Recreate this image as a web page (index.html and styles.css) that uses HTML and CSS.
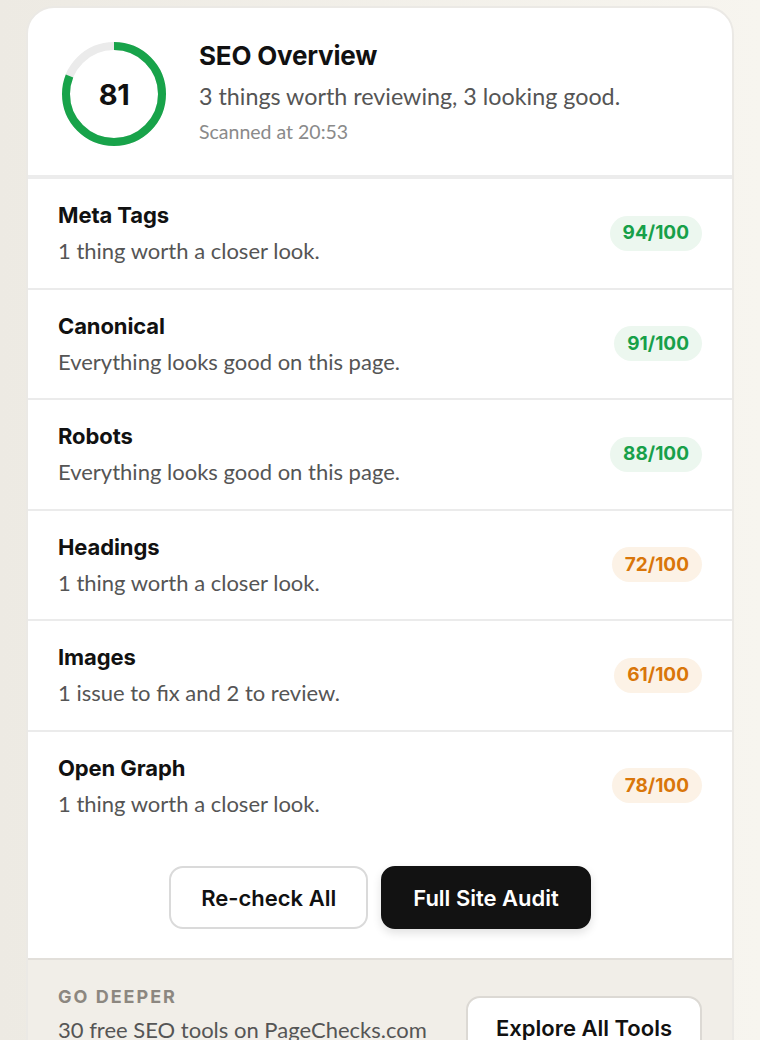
FILE: index.html
```html
<!DOCTYPE html>
<html lang="en">
<head>
    <meta charset="UTF-8">
    <meta name="viewport" content="width=device-width, initial-scale=1.0">
    <title>SEO Overview</title>
    <link rel="stylesheet" href="styles.css">
</head>
<body>
    <div class="card">
        <div class="overview">
            <div class="ring">
                <svg width="104" height="104" viewBox="0 0 104 104">
                    <circle class="ring-track" cx="52" cy="52" r="48"></circle>
                    <circle class="ring-value" cx="52" cy="52" r="48" stroke-dasharray="244.3 301.6" transform="rotate(-90 52 52)"></circle>
                </svg>
                <span class="ring-score">81</span>
            </div>
            <div class="overview-text">
                <h1 class="overview-title">SEO Overview</h1>
                <p class="overview-summary">3 things worth reviewing, 3 looking good.</p>
                <p class="overview-time">Scanned at 20:53</p>
            </div>
        </div>

        <div class="checks">
            <div class="check">
                <div class="check-info">
                    <div class="check-name">Meta Tags</div>
                    <div class="check-note">1 thing worth a closer look.</div>
                </div>
                <span class="badge good">94/100</span>
            </div>
            <div class="check">
                <div class="check-info">
                    <div class="check-name">Canonical</div>
                    <div class="check-note">Everything looks good on this page.</div>
                </div>
                <span class="badge good">91/100</span>
            </div>
            <div class="check">
                <div class="check-info">
                    <div class="check-name">Robots</div>
                    <div class="check-note">Everything looks good on this page.</div>
                </div>
                <span class="badge good">88/100</span>
            </div>
            <div class="check">
                <div class="check-info">
                    <div class="check-name">Headings</div>
                    <div class="check-note">1 thing worth a closer look.</div>
                </div>
                <span class="badge warn">72/100</span>
            </div>
            <div class="check">
                <div class="check-info">
                    <div class="check-name">Images</div>
                    <div class="check-note">1 issue to fix and 2 to review.</div>
                </div>
                <span class="badge warn">61/100</span>
            </div>
            <div class="check">
                <div class="check-info">
                    <div class="check-name">Open Graph</div>
                    <div class="check-note">1 thing worth a closer look.</div>
                </div>
                <span class="badge warn">78/100</span>
            </div>
        </div>

        <div class="actions">
            <button class="btn">Re-check All</button>
            <button class="btn btn-dark">Full Site Audit</button>
        </div>

        <div class="promo">
            <div class="promo-text">
                <div class="promo-label">GO DEEPER</div>
                <div class="promo-desc">30 free SEO tools on PageChecks.com</div>
            </div>
            <button class="btn btn-promo">Explore All Tools</button>
        </div>
    </div>
</body>
</html>
```

FILE: styles.css
```css
body {
    margin: 0;
    padding: 6px 0 40px;
    background: linear-gradient(90deg, #edeae3, #f7f5ef);
    font-family: Lato, "Noto Sans", sans-serif;
    color: #111;
}
.card {
    width: 704px;
    margin: 0 auto;
    background: #fff;
    border: 2px solid #ebe9e5;
    border-radius: 28px 28px 0 0;
    overflow: hidden;
}
.overview {
    display: flex;
    align-items: flex-start;
    gap: 33px;
    padding: 34px 34px 29px;
    border-bottom: 4px solid #ececec;
}
.ring {
    position: relative;
    width: 104px;
    height: 104px;
    flex-shrink: 0;
}
.ring svg {
    display: block;
}
.ring-track {
    fill: none;
    stroke: #ebebeb;
    stroke-width: 8;
}
.ring-value {
    fill: none;
    stroke: #18a34a;
    stroke-width: 8;
}
.ring-score {
    position: absolute;
    inset: 0;
    display: flex;
    align-items: center;
    justify-content: center;
    font-family: Inter, sans-serif;
    font-weight: 700;
    font-size: 29px;
    letter-spacing: -0.5px;
    color: #111;
}
.overview-text {
    margin-top: -1px;
}
.overview-title {
    margin: 0;
    font-family: Inter, sans-serif;
    font-size: 26px;
    font-weight: 700;
    letter-spacing: -0.2px;
    line-height: 30px;
}
.overview-summary {
    margin: 10px 0 0;
    font-size: 23.3px;
    line-height: 30px;
    color: #555;
}
.overview-time {
    margin: 8px 0 0;
    font-size: 19.5px;
    line-height: 26px;
    color: #8a8a8a;
}
.check {
    display: flex;
    align-items: center;
    justify-content: space-between;
    padding: 22px 30px 22.5px;
    border-bottom: 2px solid #ebebeb;
}
.check:last-child {
    border-bottom: none;
}
.check-name {
    font-family: Inter, sans-serif;
    font-size: 22px;
    font-weight: 700;
    letter-spacing: -0.1px;
    line-height: 28px;
}
.check-note {
    margin-top: 8px;
    font-size: 22px;
    line-height: 28px;
    color: #555;
}
.badge {
    padding: 3.5px 13px;
    border-radius: 18px;
    font-family: Inter, sans-serif;
    font-size: 19px;
    font-weight: 700;
    line-height: 28px;
}
.badge.good {
    color: #17a049;
    background: #ecf7ef;
}
.badge.warn {
    color: #d9760a;
    background: #fcf2e6;
}
.actions {
    display: flex;
    justify-content: center;
    gap: 13px;
    padding: 26px 30px 29px;
    border-bottom: 2px solid #e2dfda;
}
.btn {
    height: 63px;
    padding: 0 30px;
    border: 2px solid #dadada;
    border-radius: 14px;
    background: #fff;
    color: #111;
    font-family: Inter, sans-serif;
    font-size: 22px;
    font-weight: 600;
    letter-spacing: 0;
    cursor: pointer;
}
.btn-dark {
    background: #121212;
    border-color: #121212;
    color: #fff;
    box-shadow: 0 4px 10px rgba(0, 0, 0, 0.12);
}
.promo {
    display: flex;
    align-items: flex-start;
    justify-content: space-between;
    padding: 26px 30px 30px;
    background: #f1eee8;
}
.promo-label {
    font-family: Inter, sans-serif;
    font-size: 18px;
    font-weight: 700;
    letter-spacing: 2px;
    line-height: 22px;
    color: #8c8780;
}
.promo-desc {
    margin-top: 8px;
    font-size: 22px;
    line-height: 28px;
    color: #555;
}
.btn-promo {
    margin-top: 10px;
    padding: 0 28px;
    border-color: #dcd9d4;
}
```
